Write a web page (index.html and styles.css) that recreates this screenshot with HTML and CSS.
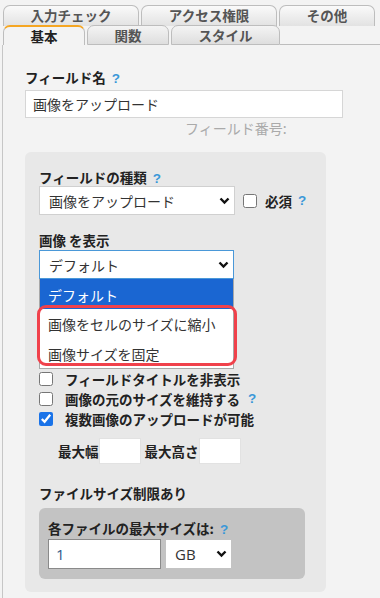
FILE: index.html
```html
<!DOCTYPE html>
<html lang="ja">
<head>
    <meta charset="UTF-8">
    <meta name="viewport" content="width=device-width, initial-scale=1.0">
    <title>フィールド設定</title>
    <link rel="stylesheet" href="styles.css">
</head>
<body>
    <div class="tabs">
        <div class="tab-row back">
            <div class="tab tab-check">入力チェック</div>
            <div class="tab tab-access">アクセス権限</div>
            <div class="tab tab-other">その他</div>
        </div>
        <div class="tab-row front">
            <div class="tab tab-basic active">基本</div>
            <div class="tab tab-func">関数</div>
            <div class="tab tab-style">スタイル</div>
            <div class="tab-fill"></div>
        </div>
    </div>

    <div class="content">
        <div class="label">フィールド名 <span class="help">?</span></div>
        <input class="text-input name-input" type="text" value="画像をアップロード">
        <div class="field-no">フィールド番号:</div>

        <div class="panel">
            <div class="label">フィールドの種類 <span class="help">?</span></div>
            <div class="type-row">
                <div class="select type-select">
                    <span>画像をアップロード</span>
                    <svg class="chevron" width="11" height="8" viewBox="0 0 11 8"><path d="M1.5 1.5 L5.5 5.5 L9.5 1.5" fill="none" stroke="#111" stroke-width="2.4"/></svg>
                </div>
                <input class="check required-check" type="checkbox">
                <span class="required">必須</span>
                <span class="help">?</span>
            </div>

            <div class="label display-label">画像&nbsp;を表示</div>
            <div class="select display-select focused">
                <span>デフォルト</span>
                <svg class="chevron" width="11" height="8" viewBox="0 0 11 8"><path d="M1.5 1.5 L5.5 5.5 L9.5 1.5" fill="none" stroke="#111" stroke-width="2.4"/></svg>
            </div>
            <div class="options">
                <div class="option selected">デフォルト</div>
                <div class="option">画像をセルのサイズに縮小</div>
                <div class="option">画像サイズを固定</div>
                <div class="mark-box"></div>
            </div>

            <label class="check-row"><input class="check" type="checkbox"><span>フィールドタイトルを非表示</span></label>
            <label class="check-row"><input class="check" type="checkbox"><span>画像の元のサイズを維持する</span><span class="help">?</span></label>
            <label class="check-row"><input class="check" type="checkbox" checked><span>複数画像のアップロードが可能</span></label>

            <div class="size-row">
                <span>最大幅</span>
                <input class="text-input small-input" type="text">
                <span class="gap-label">最大高さ</span>
                <input class="text-input small-input" type="text">
            </div>

            <div class="label limit-label">ファイルサイズ制限あり</div>
            <div class="inner-panel">
                <div class="label">各ファイルの最大サイズは: <span class="help">?</span></div>
                <div class="limit-row">
                    <input class="text-input limit-input" type="text" value="1">
                    <div class="select unit-select">
                        <span>GB</span>
                        <svg class="chevron" width="11" height="8" viewBox="0 0 11 8"><path d="M1.5 1.5 L5.5 5.5 L9.5 1.5" fill="none" stroke="#111" stroke-width="2.4"/></svg>
                    </div>
                </div>
            </div>
        </div>
    </div>
</body>
</html>
```

FILE: styles.css
```css
body {
    margin: 0;
    background-color: #f3f3f3;
    font-family: "Noto Sans CJK JP", sans-serif;
    font-size: 13.5px;
    color: #222;
}

/* tabs */
.tabs {
    padding: 5px 0 0 3px;
}

.tab-row {
    display: flex;
    gap: 2px;
    height: 20px;
}

.tab {
    box-sizing: border-box;
    height: 21px;
    border: 1px solid #bdbdbd;
    border-bottom: none;
    border-radius: 7px 7px 0 0;
    background: linear-gradient(#fafafa, #e2e2e2);
    text-align: center;
    font-size: 13.5px;
    font-weight: bold;
    line-height: 19px;
    color: #555;
}

.tab-check, .tab-access { width: 136px; }
.tab-other { width: 96px; }
.tab-basic, .tab-func { width: 82px; }
.tab-style { width: 109px; }

.front .tab {
    height: 20px;
    border-bottom: 1px solid #bdbdbd;
    background: linear-gradient(#f4f4f4, #dedede);
}

.front .tab.active {
    border-top: 2px solid #f5a623;
    border-bottom: none;
    background: #f3f3f3;
    color: #222;
    line-height: 18px;
}

.tab-fill {
    flex: 1;
    margin-left: -2px;
    border-bottom: 1px solid #bdbdbd;
}

/* content */
.content {
    margin-left: 2px;
    border-left: 1px solid #c6c6c6;
    padding: 23px 0 6px 22px;
}

.label {
    height: 18px;
    font-weight: bold;
    line-height: 18px;
}

.help {
    font-family: "Liberation Sans", sans-serif;
    font-weight: bold;
    line-height: 1;
    color: #3a98d8;
    margin-left: 3px;
}

.text-input {
    box-sizing: border-box;
    border: 1px solid #d6d6d6;
    background: white;
    font-family: "Noto Sans CJK JP", sans-serif;
    font-size: 14px;
    color: #333;
    outline: none;
    margin: 0;
}

.name-input {
    display: block;
    width: 318px;
    height: 28px;
    margin-top: 4px;
    padding: 0 7px;
}

.field-no {
    height: 18px;
    margin: 1px 0 0 160px;
    line-height: 18px;
    font-size: 14px;
    color: #aaa;
}

.panel {
    box-sizing: border-box;
    width: 301px;
    margin-top: 15px;
    padding: 16px 14px 13px;
    background-color: #e8e8e8;
    border-radius: 6px;
}

.select {
    box-sizing: border-box;
    display: flex;
    flex-shrink: 0;
    align-items: center;
    justify-content: space-between;
    background: white;
    border: 1px solid #d0d0d0;
    font-size: 14px;
    color: #333;
    padding: 0 4px 0 9px;
}

.check {
    flex-shrink: 0;
    width: 14px;
    height: 14px;
    margin: 0;
    accent-color: #1a73e8;
}

.type-row {
    display: flex;
    align-items: center;
    height: 29px;
}

.type-select {
    width: 196px;
    height: 29px;
}

.type-row .required-check {
    margin-left: 8px;
}

.required {
    font-weight: bold;
    margin-left: 8px;
}

.type-row .help {
    margin-left: 6px;
}

.display-label {
    margin-top: 16px;
}

.display-select {
    width: 195px;
    height: 29px;
    margin-top: 1px;
}

.focused {
    border-color: #4a98d8;
}

.options {
    position: relative;
    box-sizing: border-box;
    width: 195px;
    height: 90px;
    background: white;
    border: 1px solid #a8a8a8;
    border-top: none;
}

.option {
    height: 30px;
    line-height: 30px;
    padding-left: 8px;
    font-size: 14px;
    color: #333;
    overflow: hidden;
}

.option:nth-child(3) {
    height: 29px;
}

.option.selected {
    background-color: #1a66d2;
    color: white;
    line-height: 32px;
}

.mark-box {
    position: absolute;
    top: 26px;
    left: -3px;
    box-sizing: border-box;
    width: 200px;
    height: 61px;
    border: 3px solid #f0414b;
    border-radius: 9px;
}

.check-row {
    display: flex;
    align-items: center;
    height: 20px;
    font-weight: bold;
}

.check-row span:first-of-type {
    margin-left: 12px;
}

.check-row .help {
    margin-left: 8px;
}

.size-row {
    display: flex;
    align-items: center;
    height: 26px;
    margin-top: 9px;
    padding-left: 19px;
    font-weight: bold;
}

.small-input {
    width: 42px;
    height: 26px;
    border-color: #e2e2e2;
}

.gap-label {
    margin-left: 4px;
}

.limit-label {
    margin-top: 20px;
}

.inner-panel {
    box-sizing: border-box;
    width: 266px;
    margin-top: 6px;
    padding: 11px 9px 10px;
    background-color: #c3c3c3;
    border-radius: 6px;
}

.limit-row {
    display: flex;
    align-items: center;
    height: 30px;
    margin-top: 2px;
}

.limit-input {
    width: 113px;
    height: 30px;
    padding: 0 7px;
    border: 1px solid #8a8a8a;
    font-family: "Open Sans", sans-serif;
    font-size: 15px;
    color: #2f5a8a;
}

.unit-select {
    width: 65px;
    height: 28px;
    margin-left: 5px;
    border: none;
    font-family: "Open Sans", sans-serif;
    font-size: 15px;
    padding: 0 4px 0 9px;
}
```
